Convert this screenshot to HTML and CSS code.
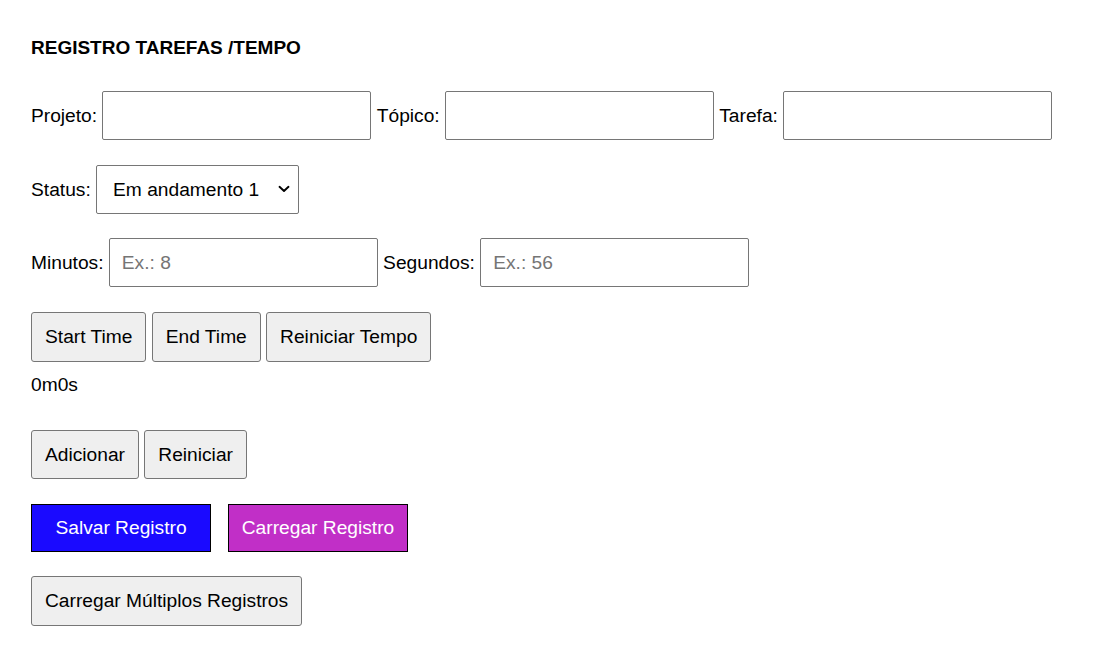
FILE: index.html
```html
<!DOCTYPE html>
<html lang="pt">
<head>
<meta charset="utf-8">
<title>Registro Tarefas / Tempo</title>
<link rel="stylesheet" href="styles.css">
</head>
<body>
<main class="page">
  <h3 class="title">REGISTRO TAREFAS /TEMPO</h3>

  <div class="row row-1">
    <label class="lbl" for="projeto">Projeto:</label>
    <input class="field" id="projeto" type="text">
    <label class="lbl" for="topico">Tópico:</label>
    <input class="field" id="topico" type="text">
    <label class="lbl" for="tarefa">Tarefa:</label>
    <input class="field" id="tarefa" type="text">
  </div>

  <div class="row row-2">
    <label class="lbl" for="status">Status:</label>
    <span class="select-wrap">
      <select class="select" id="status">
        <option>Em andamento 1</option>
        <option>Concluído</option>
      </select>
      <svg class="chevron" width="12" height="8" viewBox="0 0 12 8" aria-hidden="true">
        <path d="M1.5 1.8 L6 6 L10.5 1.8" fill="none" stroke="#000" stroke-width="1.9" stroke-linecap="round" stroke-linejoin="round"/>
      </svg>
    </span>
  </div>

  <div class="row row-3">
    <label class="lbl" for="minutos">Minutos:</label>
    <input class="field" id="minutos" type="text" placeholder="Ex.: 8">
    <label class="lbl" for="segundos">Segundos:</label>
    <input class="field" id="segundos" type="text" placeholder="Ex.: 56">
  </div>

  <div class="row row-4">
    <button class="btn" type="button">Start Time</button>
    <button class="btn" type="button">End Time</button>
    <button class="btn" type="button">Reiniciar Tempo</button>
  </div>

  <div class="timer">0m0s</div>

  <div class="row row-5">
    <button class="btn" type="button">Adicionar</button>
    <button class="btn" type="button">Reiniciar</button>
  </div>

  <div class="row row-6">
    <button class="btn-color btn-blue" type="button">Salvar Registro</button>
    <button class="btn-color btn-purple" type="button">Carregar Registro</button>
  </div>

  <div class="row row-7">
    <button class="btn" type="button">Carregar Múltiplos Registros</button>
  </div>
</main>
</body>
</html>
```

FILE: styles.css
```css
html, body {
  margin: 0;
  padding: 0;
  background: #ffffff;
}

body {
  font-family: "Liberation Sans", Arial, sans-serif;
  font-size: 16px;
  color: #000000;
}

.page {
  padding: 37px 0 0 31px;
}

.title {
  margin: 0 0 32px 0;
  font-size: 19px;
  line-height: 22px;
  font-weight: bold;
}

.row {
  display: flex;
  align-items: center;
  gap: 5.3px;
}

.row-1 { height: 49px; margin-bottom: 25px; }
.row-2 { height: 49px; margin-bottom: 24px; }
.row-3 { height: 49px; margin-bottom: 25px; }
.row-4 { height: 50px; margin-bottom: 12px; }
.row-5 { height: 49px; margin-bottom: 25px; }
.row-6 { height: 48px; margin-bottom: 24px; gap: 17px; }
.row-7 { height: 50px; }

.lbl {
  font-size: 19.2px;
  line-height: 22px;
  color: #000000;
}

.field {
  box-sizing: border-box;
  width: 269px;
  height: 100%;
  margin: 0;
  padding: 0 12px;
  border: 1px solid #767676;
  border-radius: 2px;
  font-family: "Liberation Sans", Arial, sans-serif;
  font-size: 19.2px;
  color: #000000;
  background: #ffffff;
  outline: none;
}

.field::placeholder {
  color: #757575;
}

.select-wrap {
  position: relative;
  display: block;
  width: 203px;
  height: 100%;
}

.select {
  box-sizing: border-box;
  width: 100%;
  height: 100%;
  margin: 0;
  padding: 0 30px 0 16px;
  border: 1px solid #767676;
  border-radius: 2px;
  -webkit-appearance: none;
  appearance: none;
  font-family: "Liberation Sans", Arial, sans-serif;
  font-size: 19.2px;
  color: #000000;
  background-color: #ffffff;
  outline: none;
}

.chevron {
  position: absolute;
  right: 9px;
  top: 20px;
  pointer-events: none;
}

.btn {
  box-sizing: border-box;
  height: 100%;
  margin: 0;
  padding: 0 13px;
  border: 1px solid #767676;
  border-radius: 3px;
  background: #efefef;
  font-family: "Liberation Sans", Arial, sans-serif;
  font-size: 19.2px;
  color: #000000;
  white-space: nowrap;
}

.timer {
  font-size: 19.2px;
  line-height: 22px;
  height: 22px;
  margin-bottom: 34px;
}

.btn-color {
  box-sizing: border-box;
  width: 180px;
  height: 100%;
  margin: 0;
  padding: 0;
  border: 1px solid #000000;
  border-radius: 0;
  font-family: "Liberation Sans", Arial, sans-serif;
  font-size: 19.2px;
  color: #ffffff;
  white-space: nowrap;
}

.btn-blue { background: #1a0aff; }
.btn-purple { background: #c12fc7; }
```
